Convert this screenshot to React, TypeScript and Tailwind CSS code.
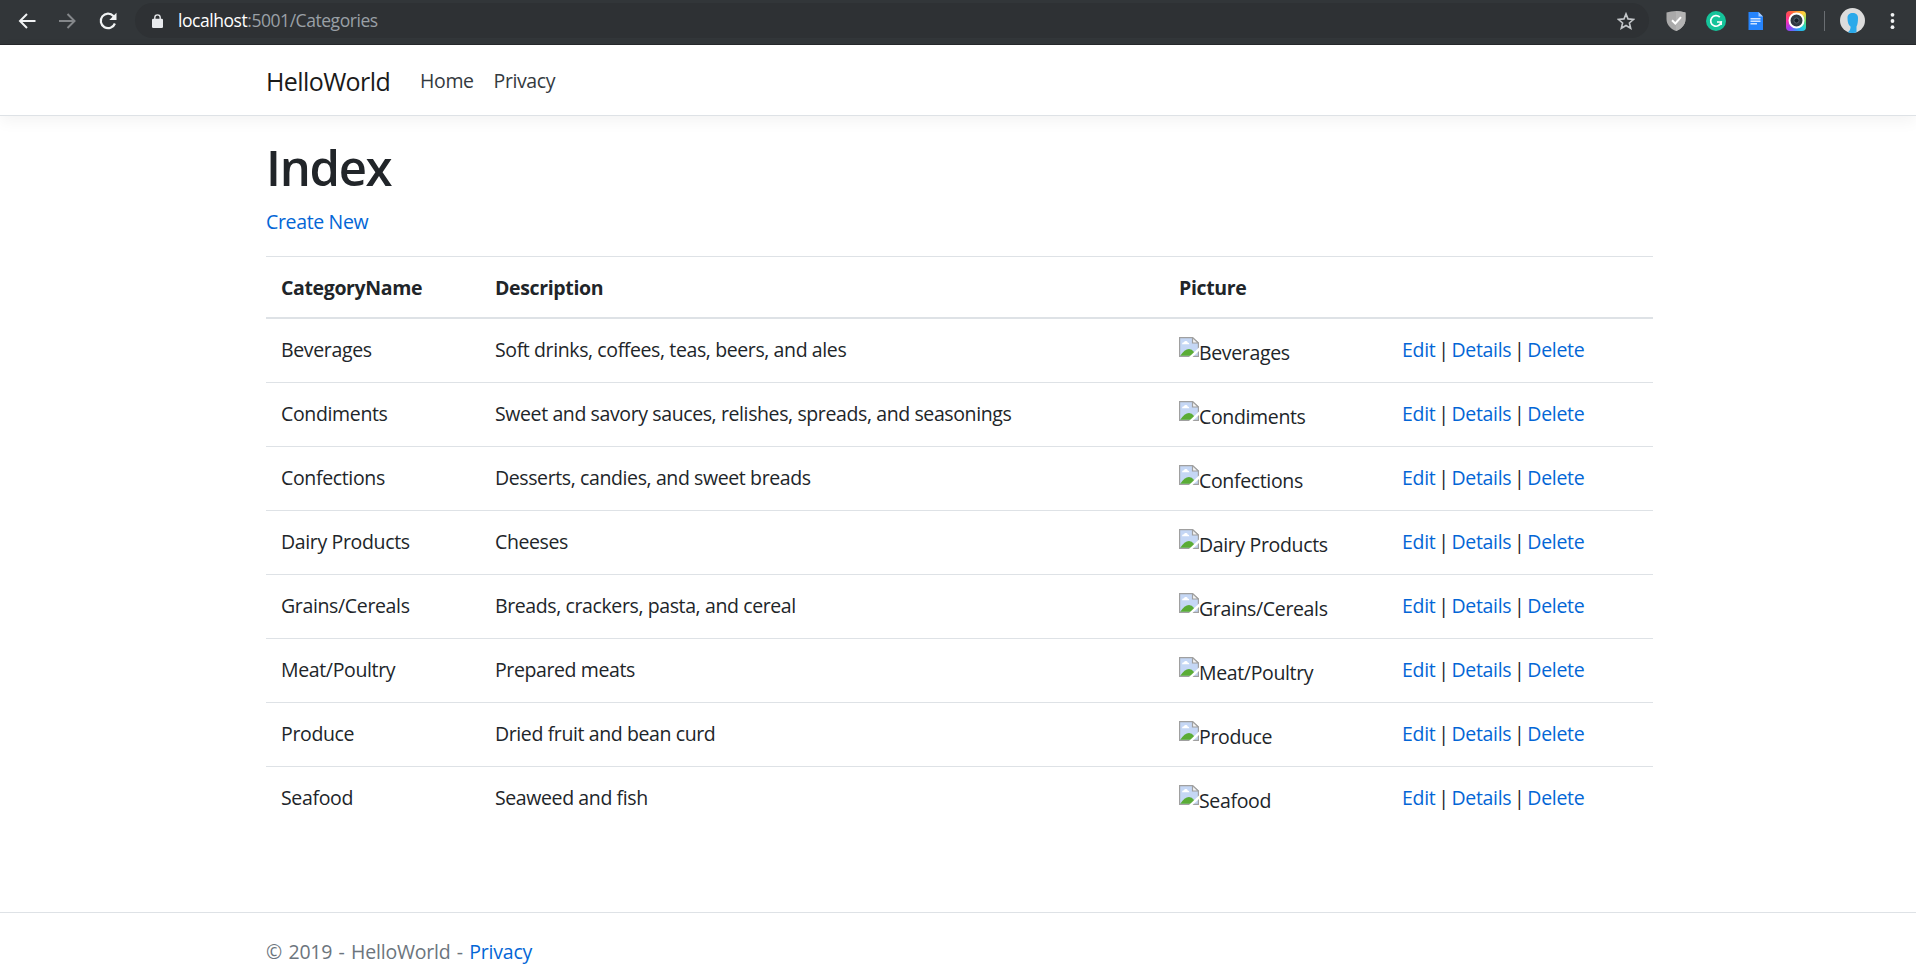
import React from "react";

type Category = { name: string; description: string };

const categories: Category[] = [
  { name: "Beverages", description: "Soft drinks, coffees, teas, beers, and ales" },
  { name: "Condiments", description: "Sweet and savory sauces, relishes, spreads, and seasonings" },
  { name: "Confections", description: "Desserts, candies, and sweet breads" },
  { name: "Dairy Products", description: "Cheeses" },
  { name: "Grains/Cereals", description: "Breads, crackers, pasta, and cereal" },
  { name: "Meat/Poultry", description: "Prepared meats" },
  { name: "Produce", description: "Dried fruit and bean curd" },
  { name: "Seafood", description: "Seaweed and fish" },
];

function ChromeBar() {
  return (
    <div className="flex h-[45px] shrink-0 items-start border-b border-[#26282b] bg-[#323639]">
      <div className="flex h-[41px] w-[135px] shrink-0 items-center">
        <svg className="ml-[17px] h-5 w-5" viewBox="0 0 20 20" fill="none" stroke="#f1f3f4" strokeWidth="2">
          <path d="M18.5 10H3.5M10 3L3 10L10 17" />
        </svg>
        <svg className="ml-[20px] h-5 w-5" viewBox="0 0 20 20" fill="none" stroke="#84878a" strokeWidth="2">
          <path d="M2 10H17M10.5 3L17.5 10L10.5 17" />
        </svg>
        <svg className="ml-[21px] h-5 w-5" viewBox="0 0 20 20" fill="none" stroke="#f1f3f4" strokeWidth="2.2">
          <path d="M16.9 12.5A7.3 7.3 0 1 1 15.4 4.9L17 6.6" />
          <path d="M18.5 1.8V9H11.3Z" fill="#f1f3f4" stroke="none" />
        </svg>
      </div>
      <div className="mt-[3px] flex h-[35px] w-[1514px] shrink-0 items-center rounded-full bg-[#2e3134]">
        <svg className="ml-[17px] h-[14px] w-[11px]" viewBox="0 0 11 14">
          <rect x="0" y="4.8" width="11" height="9.2" rx="1.3" fill="#e8eaed" />
          <path d="M2.8 5.5V3.6a2.7 2.7 0 0 1 5.4 0v1.9" fill="none" stroke="#e8eaed" strokeWidth="1.4" />
        </svg>
        <span className="-mt-px ml-[15px] text-[17.5px] leading-[24px] tracking-[-0.45px] text-[#9aa0a6]">
          <span className="text-white">localhost</span>:5001/Categories
        </span>
        <svg className="ml-auto mr-[14px] h-[18px] w-[18px]" viewBox="0 0 18 18" fill="none" stroke="#c3c6c9" strokeWidth="1.6">
          <path d="M9 1.9l2 5 5.6.5-4.200 3.600 1.300 5.300L9 13.500l-4.700 2.800 1.300-5.300L1.400 7.400 7 6.900z" />
        </svg>
      </div>
      <div className="flex h-[41px] items-center">
        <svg className="ml-[17px] h-5 w-5" viewBox="0 0 20 20">
          <path d="M10 0Q15 0 19.500 1.500V8C19.500 14 15 18 10 20C5 18 .5 14 .5 8V1.500Q5 0 10 0Z" fill="#a9a9a9" />
          <path d="M10 0Q15 0 19.500 1.500V8C19.500 14 15 18 10 20Z" fill="#b3b3b3" />
          <path d="M6 9.200L9.300 12.500L15 6.200" fill="none" stroke="#fff" strokeWidth="2" />
        </svg>
        <svg className="ml-[20px] h-5 w-5" viewBox="0 0 20 20">
          <circle cx="10" cy="10" r="10" fill="#15c39a" />
          <path d="M13.800 6.200A5.300 5.300 0 1 0 15.200 11H11" fill="none" stroke="#fff" strokeWidth="1.700" />
          <path d="M15.200 10.200V14" stroke="#fff" strokeWidth="1.500" />
        </svg>
        <svg className="ml-[20px] h-5 w-5" viewBox="0 0 20 20">
          <path d="M2.500 1H12.500L17 5.500V19H2.500Z" fill="#2684fc" />
          <path d="M12.500 1L17 5.500H12.500Z" fill="#a9cdfd" />
          <path d="M4.500 7.800H14.500M4.500 10.300H14.500M4.500 12.800H11" stroke="#d3e5ff" strokeWidth="1.400" />
        </svg>
        <div className="ml-[20px] flex h-5 w-5 items-center justify-center rounded-[4px] bg-[conic-gradient(from_0deg,#ff8a2a,#ffd33c,#5fdc6b,#1fd0e0,#3a8dff,#a33bf0,#ff2fa8,#ff4b55,#ff8a2a)]">
          <svg className="h-[17px] w-[17px]" viewBox="0 0 17 17">
            <circle cx="8.500" cy="8.500" r="7" fill="#303943" stroke="#fff" strokeWidth="2" />
            <circle cx="8.500" cy="8.500" r="2.600" fill="#17202a" stroke="#56626d" strokeWidth="1" />
          </svg>
        </div>
        <div className="ml-[18px] h-5 w-px bg-[#6a6e72]" />
        <svg className="ml-[15px] h-[25px] w-[25px]" viewBox="0 0 25 25">
          <circle cx="12.500" cy="12.500" r="12.500" fill="#dcdcdc" />
          <path d="M7.500 10C7.500 6.500 9.500 5 12.700 5S18 6.500 18 10C18 14 17.500 16.500 16.500 18.500V24.300Q12.500 25.800 8 24.200Q11 22.500 10.500 18.500C8.500 17.500 7.500 14 7.500 10Z" fill="#29a9ea" />
        </svg>
        <svg className="ml-[18px] h-5 w-5" viewBox="0 0 20 20" fill="#f1f3f4">
          <circle cx="9.500" cy="3.800" r="1.900" />
          <circle cx="9.500" cy="10" r="1.900" />
          <circle cx="9.500" cy="16.200" r="1.900" />
        </svg>
      </div>
    </div>
  );
}

function BrokenImage() {
  return (
    <svg className="h-5 w-5 shrink-0" viewBox="0 0 20 20">
      <path d="M.6.6H13.500L19.400 6V19.400H.6Z" fill="#c5d7f5" stroke="#a0a0a0" strokeWidth="1.200" />
      <path d="M3 7.200Q3 5.200 5 5.200Q5.600 3.500 7.300 4Q8.600 4.200 8.700 5.500Q10.300 5.500 10.300 7.200Z" fill="#fff" />
      <path d="M1.200 18.800C4 14.500 7 12 10 12Q13 12 15 15V18.800Z" fill="#5aac36" />
      <path d="M20 10.500L10 20H13.500L20 14Z" fill="#fff" />
      <path d="M13.500.6V6H19.400Z" fill="#f4f4f4" stroke="#a0a0a0" strokeWidth="1.200" />
    </svg>
  );
}

function Link({ children }: { children: React.ReactNode }) {
  return <a href="#" className="text-[#0366d6]">{children}</a>;
}

function HeadCell({ children }: { children?: React.ReactNode }) {
  return (
    <th className="h-[63px] border-b-2 border-t border-[#dee2e6] px-[15px] pt-[2px] font-bold tracking-[-0.36px]">
      {children}
    </th>
  );
}

export default function App() {
  return (
    <div className="flex h-[973px] flex-col overflow-hidden bg-white font-['Open_Sans','Noto_Sans',sans-serif] text-[19.5px] leading-[30px] tracking-[-0.35px] text-[#212529]">
      <ChromeBar />
      <header className="flex h-[71px] shrink-0 items-center border-b border-[#dee2e6] pl-[266px] pt-[2px] shadow-[0_5px_15px_rgba(0,0,0,0.05)]">
        <a href="#" className="text-[25px] leading-[38px] tracking-[-0.6px] text-[#1a1a1a]">HelloWorld</a>
        <nav className="flex gap-5 pl-[30px] tracking-[-0.4px]">
          <a href="#" className="text-[#343a40]">Home</a>
          <a href="#" className="text-[#343a40]">Privacy</a>
        </nav>
      </header>
      <main className="w-[1653px] pl-[266px] pt-[21px]">
        <h1 className="text-[49px] font-semibold leading-[60px] tracking-[-1.3px]">Index</h1>
        <p className="mt-[10px]"><Link>Create New</Link></p>
        <table className="mt-[19px] w-[1387px] table-fixed border-separate border-spacing-0 text-left">
          <colgroup>
            <col className="w-[214px]" />
            <col className="w-[684px]" />
            <col className="w-[223px]" />
            <col className="w-[266px]" />
          </colgroup>
          <thead>
            <tr>
              <HeadCell>CategoryName</HeadCell>
              <HeadCell>Description</HeadCell>
              <HeadCell>Picture</HeadCell>
              <HeadCell />
            </tr>
          </thead>
          <tbody className="[&>tr:not(:last-child)>td]:border-b [&>tr>td]:h-[64px] [&>tr>td]:border-[#dee2e6] [&>tr>td]:px-[15px]">
            {categories.map((c) => (
              <tr key={c.name} className="align-top">
                <td className="pt-[16px]">{c.name}</td>
                <td className="pt-[16px] tracking-[-0.39px]">{c.description}</td>
                <td className="pt-[18px]">
                  <div className="flex items-start">
                    <BrokenImage />
                    <span className="pt-px">{c.name}</span>
                  </div>
                </td>
                <td className="pt-[16px] tracking-[-0.3px] [word-spacing:-2px]">
                  <Link>Edit</Link> | <Link>Details</Link> | <Link>Delete</Link>
                </td>
              </tr>
            ))}
          </tbody>
        </table>
      </main>
      <footer className="mt-auto flex h-[61px] shrink-0 items-center border-t border-[#dee2e6] pl-[266px] pt-[17px] tracking-[-0.22px] text-[#6c757d] [word-spacing:1.6px]">
        <p>© 2019 - HelloWorld - <Link>Privacy</Link></p>
      </footer>
    </div>
  );
}
